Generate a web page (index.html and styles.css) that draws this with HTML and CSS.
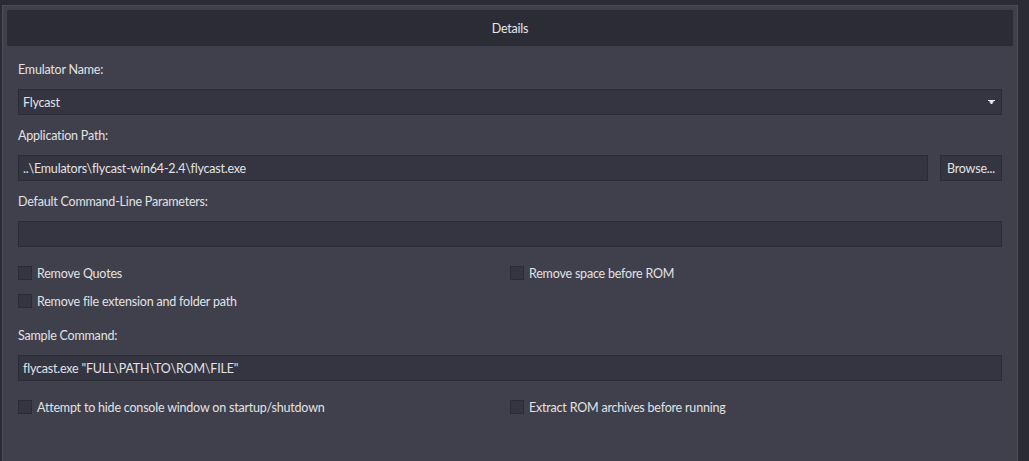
FILE: index.html
```html
<!DOCTYPE html>
<html>
<head>
<meta charset="utf-8">
<link rel="stylesheet" href="styles.css">
</head>
<body>
<div class="panel">
  <div class="header">Details</div>
  <div class="content">
    <div class="label first">Emulator Name:</div>
    <div class="field select">
      <span>Flycast</span>
      <svg class="caret" width="7" height="5" viewBox="0 0 7 5"><path d="M0 0H7V1H5.5V2.5H4.5V4H2.5V2.5H1.5V1H0Z" fill="#e8e8e8"/></svg>
    </div>
    <div class="label">Application Path:</div>
    <div class="path-row">
      <div class="field grow">..\Emulators\flycast-win64-2.4\flycast.exe</div>
      <div class="btn">Browse...</div>
    </div>
    <div class="label">Default Command-Line Parameters:</div>
    <div class="field"></div>
    <div class="checks">
      <label class="check"><span class="box"></span>Remove Quotes</label>
      <label class="check"><span class="box"></span>Remove space before ROM</label>
      <label class="check"><span class="box"></span>Remove file extension and folder path</label>
      <div class="check"></div>
    </div>
    <div class="label">Sample Command:</div>
    <div class="field">flycast.exe "FULL\PATH\TO\ROM\FILE"</div>
    <div class="checks single">
      <label class="check"><span class="box"></span>Attempt to hide console window on startup/shutdown</label>
      <label class="check"><span class="box"></span>Extract ROM archives before running</label>
    </div>
  </div>
</div>
</body>
</html>
```

FILE: styles.css
```css
html, body {
  margin: 0;
  padding: 0;
  background: #2b2b35;
  overflow: hidden;
  height: 100%;
}
body {
  font-family: "Lato", "Open Sans", sans-serif;
  font-size: 12.5px;
  letter-spacing: -0.2px;
  color: #e2e2e4;
}
.panel {
  box-sizing: border-box;
  margin: 5px 0 0 2px;
  width: 1016px;
  height: calc(100% - 5px);
  background: #3f404c;
  border: 1px solid #4b4c5a;
  border-bottom: none;
  overflow: hidden;
}
.header {
  margin: 4px;
  height: 36px;
  background: #2c2c36;
  display: flex;
  align-items: center;
  justify-content: center;
  color: #e6e6e8;
}
.content {
  padding: 0 15px;
}
.label {
  height: 20px;
  line-height: 20px;
  margin: 11px 0 9px;
}
.label.first {
  margin-top: 14px;
}
.field {
  box-sizing: border-box;
  height: 26px;
  background: #343541;
  border: 1px solid #2a2b36;
  padding: 0 4px;
  line-height: 25px;
  white-space: nowrap;
}
.select {
  display: flex;
  align-items: center;
  justify-content: space-between;
  padding-right: 6px;
}
.caret {
  display: block;
  margin-top: 1px;
}
.path-row {
  display: flex;
  gap: 12px;
}
.grow {
  flex: 1;
}
.btn {
  box-sizing: border-box;
  width: 62px;
  height: 26px;
  background: #343541;
  border: 1px solid #2a2b36;
  display: flex;
  align-items: center;
  justify-content: center;
}
.checks {
  display: grid;
  grid-template-columns: 1fr 1fr;
  grid-auto-rows: 28px;
  margin-top: 12px;
}
.check {
  display: flex;
  align-items: center;
  gap: 5px;
}
.box {
  box-sizing: border-box;
  width: 14px;
  height: 14px;
  background: #343541;
  border: 1px solid #2a2b36;
  flex: none;
}
```
